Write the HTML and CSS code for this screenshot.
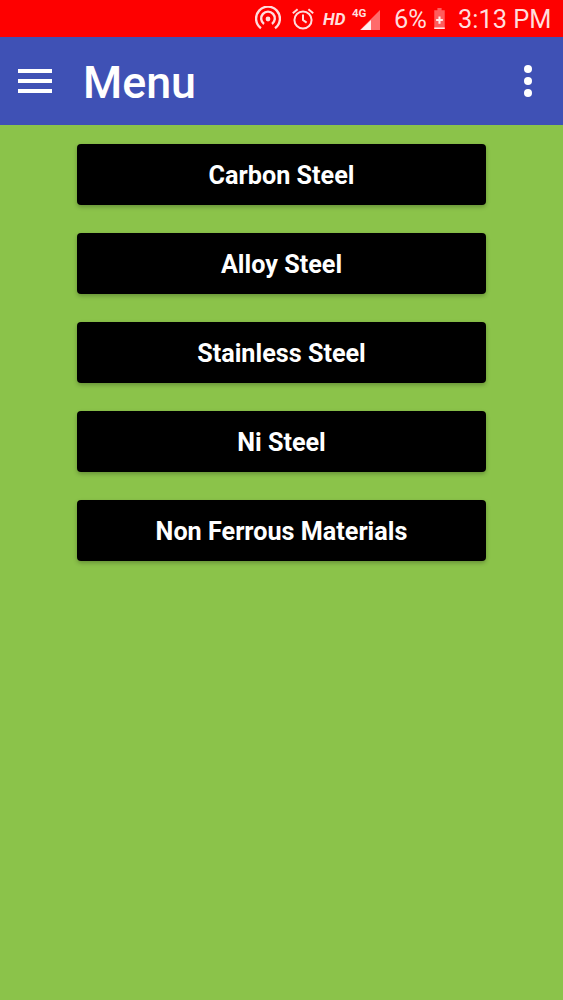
FILE: index.html
```html
<!DOCTYPE html>
<html lang="en">
<head>
<meta charset="utf-8">
<title>Menu</title>
<link rel="stylesheet" href="styles.css">
</head>
<body>
<div class="status">
  <svg class="i-cast" viewBox="0 0 24 24"><g fill="none" stroke="#fdd" stroke-width="2.2"><path d="M5.5 20.5a11 11 0 1 1 13 0"/><path d="M8.3 16.6a6.3 6.3 0 1 1 7.4 0"/></g><circle cx="12" cy="12" r="2.2" fill="#fdd"/></svg>
  <svg class="i-alarm" viewBox="0 0 24 24"><g fill="none" stroke="#fdd" stroke-width="2"><circle cx="12" cy="13" r="8.6"/><path d="M12 7.5V13l3.6 2.6"/><path d="M1.8 6.2 6.6 2.2M22.2 6.2 17.4 2.2"/></g></svg>
  <span class="hd">HD</span>
  <span class="net">4G</span>
  <svg class="i-signal" viewBox="0 0 22 22"><path d="M21 1V21H1Z" fill="#ff6b6b"/><path d="M12 11V21H1.5L12 11Z" fill="#fee"/></svg>
  <span class="pct">6%</span>
  <svg class="i-batt" viewBox="0 0 12 22"><path d="M4 1h4v2h3v18H1V3h3Z" fill="#ff5c5c"/><path d="M1 19.6h10V21H1Z" fill="#fee"/><path d="M6 9v7M2.8 12.5h6.4" stroke="#fee" stroke-width="2"/></svg>
  <span class="time">3:13 PM</span>
</div>
<header class="bar">
  <div class="burger"><span></span><span></span><span></span></div>
  <h1 class="title">Menu</h1>
  <div class="dots"><span></span><span></span><span></span></div>
</header>
<main class="menu">
  <button class="item">Carbon Steel</button>
  <button class="item">Alloy Steel</button>
  <button class="item">Stainless Steel</button>
  <button class="item">Ni Steel</button>
  <button class="item">Non Ferrous Materials</button>
</main>
</body>
</html>
```
FILE: styles.css
```css
* { box-sizing: border-box; }
html, body { margin: 0; height: 100%; }
body { width: 563px; height: 1000px; overflow: hidden; background: #8bc34a; font-family: Roboto, "Liberation Sans", sans-serif; }
.status { height: 37px; background: #fe0000; display: flex; align-items: center; padding-left: 255px; color: #fdd; }
.i-cast { width: 26px; height: 26px; flex: none; }
.i-alarm { width: 24px; height: 24px; flex: none; margin-left: 10px; }
.hd { font-size: 17px; font-weight: 700; font-style: italic; margin-left: 8px; width: 25px; }
.net { font-size: 11.5px; font-weight: 700; margin-left: 4px; align-self: flex-start; margin-top: 6px; width: 14px; }
.i-signal { width: 22px; height: 22px; flex: none; margin-left: -7px; margin-top: 2px; }
.pct { font-size: 25.4px; margin-left: 13px; width: 34px; }
.i-batt { width: 13px; height: 23px; flex: none; margin-left: 5px; }
.time { font-size: 25.4px; margin-left: 12px; white-space: nowrap; }
.bar { height: 88px; background: #3f51b5; display: flex; align-items: center; color: #fff; }
.burger { width: 34px; margin-left: 18px; display: flex; flex-direction: column; gap: 6px; margin-top: 0; }
.burger span { height: 4px; background: #fff; display: block; }
.title { margin: 4px 0 0 31px; font-size: 44.8px; font-weight: 500; flex: 1; line-height: 1; }
.dots { display: flex; flex-direction: column; gap: 4px; margin-right: 31px; }
.dots span { width: 8px; height: 8px; border-radius: 50%; background: #fff; display: block; }
.menu { display: flex; flex-direction: column; align-items: center; gap: 28px; padding-top: 19px; }
.item { width: 409px; height: 61px; border: 0; border-radius: 4px; background: #000; color: #fff; font: 700 25.2px Roboto, "Liberation Sans", sans-serif; box-shadow: 0 2px 4px rgba(0,0,0,.25); padding: 2px 0 0; }
```
